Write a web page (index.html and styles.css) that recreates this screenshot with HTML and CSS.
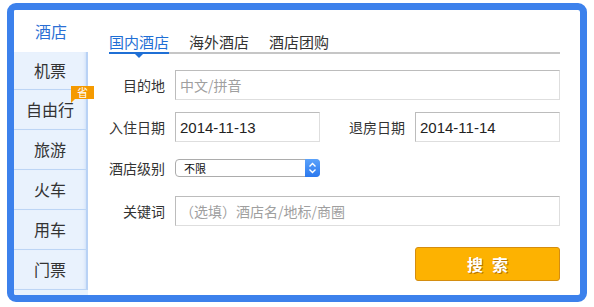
FILE: index.html
```html
<!DOCTYPE html>
<html lang="zh-CN">
<head>
    <meta charset="UTF-8">
    <title>酒店搜索</title>
    <link rel="stylesheet" href="styles.css">
</head>
<body>
  <div class="box">
    <ul class="side">
      <li class="on">酒店</li>
      <li class="short">机票</li>
      <li>自由行<span class="badge">省</span></li>
      <li>旅游</li>
      <li>火车</li>
      <li>用车</li>
      <li>门票</li>
    </ul>

    <div class="main">
      <div class="tabs">
        <a class="on">国内酒店</a>
        <a>海外酒店</a>
        <a>酒店团购</a>
      </div>

      <form>
        <div class="row r1">
          <label>目的地</label>
          <input type="text" class="wide" placeholder="中文/拼音">
        </div>
        <div class="row r2">
          <label>入住日期</label>
          <input type="text" class="half" value="2014-11-13">
          <label class="lbl2">退房日期</label>
          <input type="text" class="half" value="2014-11-14">
        </div>
        <div class="row r3">
          <label>酒店级别</label>
          <div class="select">
            不限
            <span class="arrow">
              <svg width="9" height="12" viewBox="0 0 9 12">
                <path d="M1.5 4.5 L4.5 1.5 L7.5 4.5 M1.5 7.5 L4.5 10.5 L7.5 7.5" fill="none" stroke="#fff" stroke-width="1.4"/>
              </svg>
            </span>
          </div>
        </div>
        <div class="row r4">
          <label>关键词</label>
          <input type="text" class="wide" placeholder="（选填）酒店名/地标/商圈">
        </div>
        <div class="row r5">
          <button type="button" class="search">搜索</button>
        </div>
      </form>
    </div>
  </div>
</body>
</html>
```

FILE: styles.css
```css
body {
    margin: 0;
    background: #fff;
    font-family: "Noto Sans CJK SC", sans-serif;
    color: #333;
}

.box {
    display: flex;
    box-sizing: border-box;
    width: 580px;
    height: 299px;
    margin: 3px 0 0 7px;
    border: 7px solid #3c81ec;
    border-radius: 9px;
    overflow: hidden;
    background: #fff;
}

/* left menu */
.side {
    width: 74px;
    margin: 0;
    padding: 0;
    list-style: none;
    background: #e9f2fd;
    flex-shrink: 0;
}

.side li {
    position: relative;
    box-sizing: border-box;
    height: 40px;
    line-height: 38px;
    text-align: center;
    font-size: 16px;
    border-bottom: 1px solid #bcd5f5;
    border-right: 2px solid #b9d2f5;
    box-shadow: inset -3px 0 3px -2px #cfe0f8;
}

.side li.on {
    height: 42px;
    line-height: 42px;
    background: #fff;
    color: #2b6fd4;
    border-right: none;
    border-bottom: none;
    box-shadow: none;
}

.side li.short {
    height: 38px;
    line-height: 36px;
}

.badge {
    position: absolute;
    top: -4px;
    left: 57px;
    z-index: 2;
    width: 23px;
    height: 13px;
    line-height: 13px;
    font-size: 11px;
    color: #fff;
    background: #f59a00;
    text-align: center;
}

.badge::after {
    content: "";
    position: absolute;
    left: 0;
    bottom: -4px;
    border-top: 4px solid #f59a00;
    border-right: 4px solid transparent;
}

/* right part */
.main {
    flex: 1;
    padding: 22px 20px 0 21px;
}

.tabs {
    display: flex;
    gap: 20px;
    border-bottom: 2px solid #c6c6c6;
}

.tabs a {
    position: relative;
    font-size: 15px;
    line-height: 20px;
    color: #333;
    border-bottom: 2px solid transparent;
    margin-bottom: -2px;
}

.tabs a.on {
    color: #1f6fd5;
    border-bottom-color: #1f6fd5;
}

.tabs a.on::after {
    content: "";
    position: absolute;
    left: 26px;
    bottom: -6px;
    border-top: 4px solid #1f6fd5;
    border-left: 4px solid transparent;
    border-right: 4px solid transparent;
}

.row {
    display: flex;
    align-items: center;
    height: 30px;
}

.row label {
    width: 56px;
    margin-right: 10px;
    text-align: right;
    font-size: 14px;
    white-space: nowrap;
}

.row .lbl2 {
    margin-left: 29px;
}

.r1 { margin-top: 16px; }
.r2 { margin-top: 12px; }
.r3 { margin-top: 11px; }
.r4 { margin-top: 13px; }
.r5 { margin-top: 21px; height: 34px; justify-content: flex-end; }

input {
    box-sizing: border-box;
    height: 30px;
    padding: 0 4px;
    border: 1px solid;
    border-color: #bcbcbc #dedede #dedede #bcbcbc;
    font-family: "Liberation Sans", "Noto Sans CJK SC", sans-serif;
    font-size: 15px;
    color: #222;
    outline: none;
}

input::placeholder {
    font-family: "Noto Sans CJK SC", sans-serif;
    font-size: 14px;
    color: #9f9f9f;
}

.wide { width: 385px; }
.half { width: 145px; }

.select {
    position: relative;
    box-sizing: border-box;
    width: 145px;
    height: 18px;
    line-height: 16px;
    padding-left: 8px;
    border: 1px solid #acacac;
    border-radius: 4px;
    font-size: 11px;
    color: #111;
    background: #fff;
}

.arrow {
    position: absolute;
    top: -1px;
    right: -1px;
    width: 15px;
    height: 18px;
    display: flex;
    align-items: center;
    justify-content: center;
    border-radius: 0 4px 4px 0;
    background: linear-gradient(#5aa2fb, #2b78ee);
}

.search {
    width: 145px;
    height: 34px;
    padding: 0 0 0 9px;
    border: 1px solid #d48d10;
    border-radius: 3px;
    background: #fdb201;
    color: #fff;
    font-family: "Noto Sans CJK SC", sans-serif;
    font-size: 16px;
    font-weight: bold;
    letter-spacing: 9px;
    text-shadow: 1px 1px 0 #b87400;
}
```
